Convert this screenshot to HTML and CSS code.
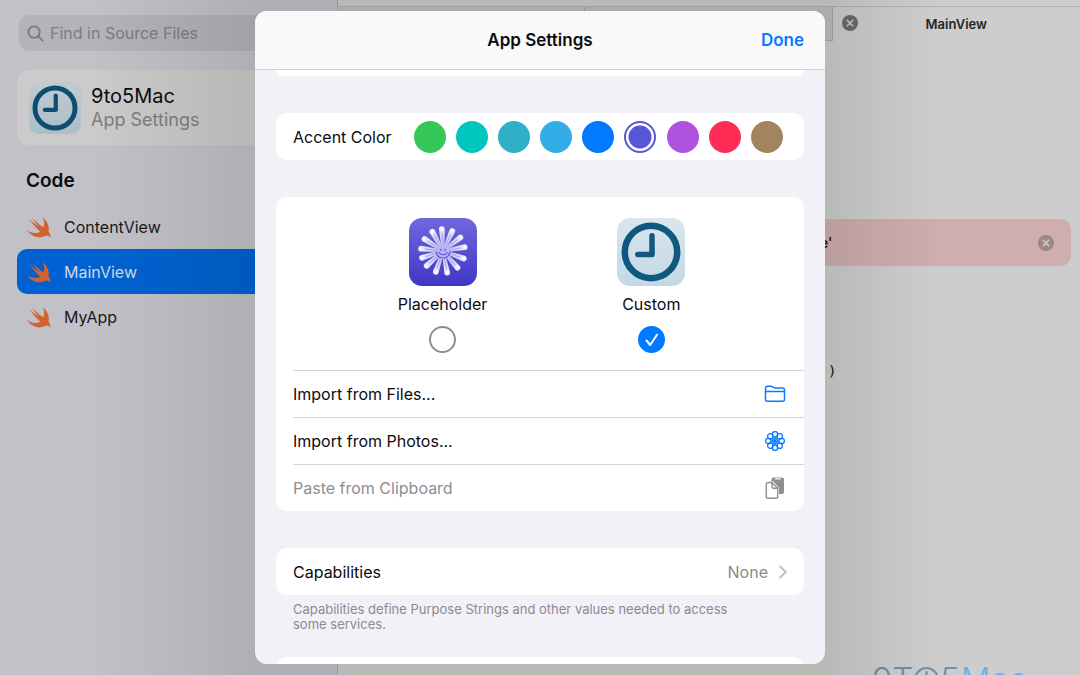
FILE: index.html
```html
<!DOCTYPE html>
<html lang="en">
<head>
<meta charset="utf-8">
<title>App Settings</title>
<link rel="stylesheet" href="styles.css">
</head>
<body>
<svg class="defs" aria-hidden="true">
  <defs>
    <linearGradient id="sky" x1="0" y1="0" x2="0" y2="1"><stop offset="0" stop-color="#dae6ee"/><stop offset="1" stop-color="#c3d8e5"/></linearGradient>
    <linearGradient id="violet" x1="0" y1="0" x2="0" y2="1"><stop offset="0" stop-color="#6f68de"/><stop offset="1" stop-color="#3f37c4"/></linearGradient>
    <linearGradient id="petalfill" x1="0" y1="0" x2="0" y2="1"><stop offset="0" stop-color="#f2f0ff"/><stop offset="1" stop-color="#bdb8f3"/></linearGradient>
    <symbol id="swift" viewBox="2.500 4 18.500 17"><path fill="currentColor" d="M13.543 4.41c4.114 2.47 6.545 7.162 5.549 11.131-.024.093-.05.181-.076.272l.002.001c2.062 2.538 1.5 5.258 1.236 4.745-1.072-2.086-3.066-1.568-4.088-1.043a6.803 6.803 0 0 1-.281.158l-.02.012-.002.002c-2.115 1.123-4.957 1.205-7.812-.022a12.568 12.568 0 0 1-5.64-4.838c.649.48 1.35.902 2.097 1.252 3.019 1.414 6.051 1.311 8.197-.002C9.651 13.73 7.101 10.4 5.149 7.951a10.38 10.38 0 0 1-1.035-1.428c2.337 2.13 6.034 4.814 7.352 5.564C8.68 9.146 6.198 5.494 6.313 5.61c4.415 4.424 8.507 6.942 8.507 6.942.137.077.243.14.327.197a8.7 8.7 0 0 0 .226-.65c.913-3.318-.124-7.092-1.83-7.689z"/></symbol>
    <symbol id="clock" viewBox="0 0 68 68"><rect width="68" height="68" rx="13" fill="url(#sky)"/><circle cx="34" cy="34" r="26.200" fill="none" stroke="#10587f" stroke-width="6.500"/><path d="M35 17.800V36.500H20.800" fill="none" stroke="#10587f" stroke-width="5.500" stroke-linecap="round" stroke-linejoin="round"/></symbol>
    <symbol id="close" viewBox="0 0 16 16"><circle cx="8" cy="8" r="8" fill="currentColor"/><path d="M5.200 5.200l5.600 5.600M10.800 5.200l-5.600 5.600" stroke="#cbc9c9" stroke-width="1.600" stroke-linecap="round"/></symbol>
    <g id="petal"><path d="M-1.500 -4L-2.900 -22A2.900 2.900 0 0 1 2.900 -22L1.500 -4z" fill="url(#petalfill)"/><path d="M0 -18V-9" stroke="#a9a2ec" stroke-width="1" stroke-linecap="round"/><circle cx="-.500" cy="-22" r="1.200" fill="#fff"/></g>
  </defs>
</svg>
<div class="app">
  <aside class="sidebar">
    <label class="search">
      <svg viewBox="0 0 18 18" width="17" height="17" fill="none" stroke="currentColor" stroke-width="1.800" stroke-linecap="round"><circle cx="7.500" cy="7.500" r="6"/><path d="M12 12l4.500 4.500"/></svg>
      <input type="search" placeholder="Find in Source Files" aria-label="Find in Source Files">
    </label>
    <button class="project" type="button">
      <svg class="project-icon"><use href="#clock"/></svg>
      <span class="project-text"><span>9to5Mac</span><span class="muted">App Settings</span></span>
    </button>
    <h2 class="section-title">Code</h2>
    <nav class="files">
      <a class="file" href="#content"><svg><use href="#swift"/></svg>ContentView</a>
      <a class="file selected" href="#main" aria-current="page"><svg><use href="#swift"/></svg>MainView</a>
      <a class="file" href="#app"><svg><use href="#swift"/></svg>MyApp</a>
    </nav>
  </aside>
  <main class="editor">
    <div class="tabs">
      <div class="tab"></div>
      <div class="tab"></div>
      <div class="tab active"><button class="close" type="button" aria-label="Close tab"><svg><use href="#close"/></svg></button><span>MainView</span></div>
    </div>
    <div class="error"><span>e'</span><button class="close" type="button" aria-label="Dismiss"><svg><use href="#close"/></svg></button></div>
    <pre class="code">)</pre>
    <div class="brand"><span>9T</span><svg viewBox="0 0 24 24" fill="none" stroke="currentColor" stroke-width="2"><circle cx="12" cy="12" r="11"/><path d="M12 4v9H6"/></svg><span>5</span><span class="brand-mac">Mac</span></div>
  </main>
</div>
<div class="backdrop">
  <section class="sheet" role="dialog" aria-label="App Settings">
    <header class="sheet-header"><h1>App Settings</h1><button type="button">Done</button></header>
    <div class="sheet-body">
      <div class="card card-before"></div>
      <div class="card accent" role="radiogroup" aria-labelledby="accent-label">
        <span id="accent-label">Accent Color</span>
        <div class="swatches">
          <input type="radio" name="accent" class="green" aria-label="Green">
          <input type="radio" name="accent" class="mint" aria-label="Mint">
          <input type="radio" name="accent" class="teal" aria-label="Teal">
          <input type="radio" name="accent" class="cyan" aria-label="Cyan">
          <input type="radio" name="accent" class="blue" aria-label="Blue">
          <input type="radio" name="accent" class="indigo" aria-label="Indigo" checked>
          <input type="radio" name="accent" class="purple" aria-label="Purple">
          <input type="radio" name="accent" class="pink" aria-label="Pink">
          <input type="radio" name="accent" class="brown" aria-label="Brown">
        </div>
      </div>
      <div class="card">
        <div class="icons">
          <label class="choice">
            <svg class="app-icon" viewBox="0 0 68 68"><rect width="68" height="68" rx="13" fill="url(#violet)"/>
              <g transform="translate(34 33)">
                <use href="#petal" transform="rotate(-3)"/><use href="#petal" transform="rotate(25)"/><use href="#petal" transform="rotate(52)"/><use href="#petal" transform="rotate(80)"/><use href="#petal" transform="rotate(110)"/><use href="#petal" transform="rotate(139)"/><use href="#petal" transform="rotate(169)"/><use href="#petal" transform="rotate(199)"/><use href="#petal" transform="rotate(228)"/><use href="#petal" transform="rotate(252)"/><use href="#petal" transform="rotate(276)"/><use href="#petal" transform="rotate(303)"/><use href="#petal" transform="rotate(331)"/>
                <circle r="8" fill="#b9b2f4"/><path d="M-7 1C-5 9 5 9 7 1M-4 1.500C-2.500 4.500 2.500 4.500 4 1.500M-2-2v1.500M2-2v1.500" fill="none" stroke="#5f57cf" stroke-width="1.200" stroke-linecap="round"/>
              </g>
            </svg>
            <span>Placeholder</span>
            <span class="radio"><input type="radio" name="icon"></span>
          </label>
          <label class="choice">
            <svg class="app-icon"><use href="#clock"/></svg>
            <span>Custom</span>
            <span class="radio"><input type="radio" name="icon" checked><svg viewBox="0 0 27 27" fill="none" stroke="#fff" stroke-width="2" stroke-linecap="round" stroke-linejoin="round"><path d="M8.500 14.500l3.700 4.500 6.800-10.300"/></svg></span>
          </label>
        </div>
        <div class="rows">
          <button class="row" type="button">Import from Files...
            <svg viewBox="0 0 22 20" fill="none" stroke="#0a7aff" stroke-width="1.500" stroke-linejoin="round"><path d="M1.500 15.300V4.200a2 2 0 0 1 2-2h3.300c1 0 1.300.2 1.900.7l.7.600c.5.400.9.600 1.700.600h7.400a2 2 0 0 1 2 2v9.200a2 2 0 0 1-2 2h-15a2 2 0 0 1-2-2zM1.500 7.500h19"/></svg>
          </button>
          <button class="row" type="button">Import from Photos...
            <svg viewBox="0 0 22 20" fill="none" stroke="#0a7aff" stroke-width="1.300"><circle cx="11" cy="3.300" r="2.700"/><circle cx="11" cy="16.700" r="2.700"/><circle cx="4.300" cy="10" r="2.700"/><circle cx="17.700" cy="10" r="2.700"/><circle cx="6.300" cy="5.300" r="2.700"/><circle cx="15.700" cy="5.300" r="2.700"/><circle cx="6.300" cy="14.700" r="2.700"/><circle cx="15.700" cy="14.700" r="2.700"/><circle cx="11" cy="10" r="2.300"/><path d="M11 6v8M7 10h8M8 7l6 6M14 7l-6 6" stroke-width="1"/></svg>
          </button>
          <button class="row" type="button" disabled>Paste from Clipboard
            <svg class="tall" viewBox="0 0 22 24"><path d="M7.500 5.500V3.500a2 2 0 0 1 2-2h8.500a2 2 0 0 1 2 2v12.500a2 2 0 0 1-2 2h-3V12L9.500 5.500z" fill="#8e8e93"/><path d="M11.500 2.800h4.600" stroke="#fff" stroke-width="1.300" stroke-linecap="round"/><path d="M8 6.500H4a1.700 1.700 0 0 0-1.700 1.700v12.300A1.700 1.700 0 0 0 4 22.200h8a1.700 1.700 0 0 0 1.700-1.700V12.300zM8 6.500v4.300a1.500 1.500 0 0 0 1.500 1.500h4.200" fill="#fff" stroke="#8e8e93" stroke-width="1.400" stroke-linejoin="round"/></svg>
          </button>
        </div>
      </div>
      <button class="card capabilities" type="button"><span>Capabilities</span><span class="value">None<svg viewBox="0 0 8 14" fill="none" stroke="#c0c0c5" stroke-width="2" stroke-linecap="round" stroke-linejoin="round"><path d="M1.200 1.500L6.800 7l-5.600 5.500"/></svg></span></button>
      <p class="note">Capabilities define Purpose Strings and other values needed to access some services.</p>
      <div class="card card-after"></div>
    </div>
  </section>
</div>
</body>
</html>
```

FILE: styles.css
```css
* { box-sizing: border-box; }
body { margin: 0; font-family: Inter, "Liberation Sans", sans-serif; font-size: 16px; line-height: 20px; color: #0c0c0e; overflow: hidden; }
button, input { font: inherit; color: inherit; margin: 0; }
button { border: 0; padding: 0; background: none; text-align: left; }
svg { display: block; flex: none; }
.defs { position: absolute; width: 0; height: 0; }

.app { display: flex; height: 100vh; overflow: hidden; }

.sidebar { flex: none; width: 338px; padding: 15px 17px; background: #c2c1c8; border-right: 1px solid #aaaaad; }
.search { display: flex; align-items: center; gap: 6px; height: 36px; margin-left: 2px; padding: 0 8px; border-radius: 10px; background: #b3b3b9; color: #77777d; }
.search input { flex: 1; min-width: 0; border: 0; padding: 0; background: none; outline: 0; }
.search input::placeholder { color: #7c7c82; opacity: 1; }
.project { display: flex; align-items: center; gap: 10px; width: 100%; height: 75px; margin-top: 19px; padding: 0 12px; border-radius: 12px; background: #cacbca; line-height: 24px; }
.project-icon { width: 52px; height: 52px; filter: brightness(.88); }
.project-text { display: flex; flex-direction: column; font-size: 20px; }
.project-text .muted { font-size: 18px; color: #7d7d80; }
.section-title { margin: 24px 0 11px 9px; font-size: 19px; line-height: 24px; font-weight: 600; }
.files { display: flex; flex-direction: column; }
.file { display: flex; align-items: center; gap: 13px; height: 45px; padding-left: 10px; border-radius: 10px; color: #19191b; text-decoration: none; }
.file svg { width: 24px; height: 22px; color: #d3622f; }
.selected { background: #0062d2; color: #ced9e8; }

.editor { position: relative; flex: 1; min-width: 0; padding-top: 6px; background: #cdcdcd; overflow: hidden; }
.tabs { display: grid; grid-template-columns: repeat(3, 1fr); height: 35px; border-top: 1px solid #b0b0b0; }
.tab { background: #bdbec2; border-right: 1px solid #a5a6a8; border-bottom: 1px solid #a5a6a8; }
.tab.active { position: relative; display: grid; place-items: center; background: none; border: 0; color: #242424; font-size: 13px; font-weight: 600; }
.close svg { width: 16px; height: 16px; }
.tab .close { position: absolute; left: 9px; top: 8px; color: #6a6b6b; }
.error { display: flex; align-items: center; justify-content: space-between; height: 47px; margin: 178px 9px 0; padding: 0 17px 0 473px; border-radius: 10px; background: #cfaead; font-size: 14px; font-weight: 500; }
.error .close { color: #9c8787; }
.code { margin: 95px 0 0 490px; font-family: "DejaVu Sans Mono", monospace; font-size: 14px; line-height: 20px; }
.brand { position: absolute; right: 53px; bottom: -24px; display: flex; align-items: center; gap: 1px; color: #6e8fa8; font-size: 33px; line-height: 40px; font-weight: 300; }
.brand svg { width: 25px; height: 25px; }
.brand-mac { color: #74aee8; }

.backdrop { position: absolute; inset: 0; display: flex; justify-content: center; padding: 11px; background: linear-gradient(90deg, rgba(0,20,0,0) calc(50% - 450px), rgba(0,20,0,.1) calc(50% - 285px), rgba(0,20,0,.1) calc(50% + 285px), rgba(0,20,0,0) calc(50% + 400px)); }
.sheet { display: flex; flex-direction: column; width: 100%; max-width: 570px; border-radius: 12px; overflow: hidden; background: #f2f1f7; }
.sheet-header { flex: none; display: grid; grid-template-columns: 1fr auto 1fr; align-items: center; height: 59px; padding: 0 21px; background: #f9f9fa; border-bottom: 1px solid #d2d2d6; }
.sheet-header h1 { grid-column: 2; margin: 0; font-size: 17px; font-weight: 600; }
.sheet-header button { justify-self: end; font-size: 17px; font-weight: 600; color: #0a7aff; }
.sheet-body { flex: 1; min-height: 0; padding: 0 21px; overflow: hidden; }
.card { width: 100%; margin: 0 0 37px; border-radius: 10px; background: #fff; }
.card-before { height: 6px; border-radius: 0 0 10px 10px; }
.card-after { height: 47px; }
.accent { display: flex; align-items: center; gap: 22px; height: 47px; padding: 0 21px 0 17px; }
.swatches { flex: 1; display: flex; justify-content: space-between; }
.swatches input { appearance: none; width: 32px; height: 32px; border-radius: 50%; background: currentColor; }
.swatches input:checked { border: 2px solid currentColor; background: radial-gradient(circle, currentColor 11px, #fff 12px); background-origin: border-box; }
.green { color: #36c759; }
.mint { color: #00c7be; }
.teal { color: #30b0c7; }
.cyan { color: #32ade6; }
.blue { color: #007aff; }
.indigo { color: #5856d6; }
.purple { color: #af52de; }
.pink { color: #ff2d55; }
.brown { color: #a2845e; }
.icons { display: flex; justify-content: center; gap: 130px; padding: 21px 0 17px 3px; }
.choice { display: flex; flex-direction: column; align-items: center; }
.choice > span { margin-top: 8px; }
.app-icon { width: 68px; height: 68px; }
.choice .radio { display: grid; margin-top: 12px; }
.radio > * { grid-area: 1 / 1; width: 27px; height: 27px; }
.radio input { appearance: none; border: 2px solid #8e8e92; border-radius: 50%; }
.radio input:checked { border-color: #007aff; background: #007aff; }
.radio svg { z-index: 1; pointer-events: none; }
.rows { padding-left: 17px; }
.row { display: flex; align-items: center; justify-content: space-between; width: 100%; height: 47px; padding-right: 18px; border-top: 1px solid #d4d4d7; }
.row:disabled { color: #8e8e93; }
.row svg { width: 22px; height: 20px; }
.row .tall { height: 24px; }
.capabilities { display: flex; align-items: center; justify-content: space-between; height: 47px; margin: 0; padding: 0 17px; }
.value { display: flex; align-items: center; gap: 11px; color: #8a8a8f; }
.value svg { width: 8px; height: 14px; }
.note { margin: 7px 60px 25px 17px; font-size: 13px; line-height: 15px; color: #8a8a90; }
```
